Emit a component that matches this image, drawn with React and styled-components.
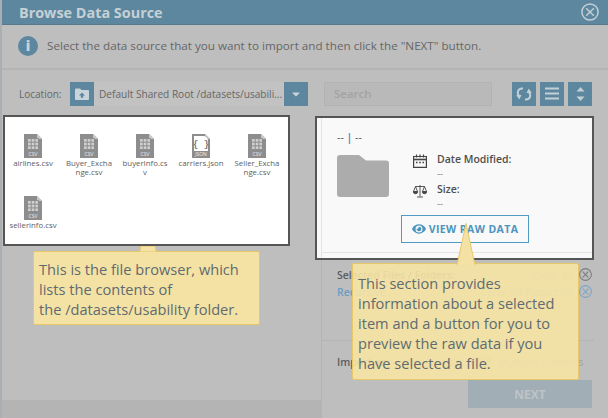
import React from 'react';
import styled, {createGlobalStyle} from 'styled-components';
import {FaEye, FaCaretDown} from 'react-icons/fa';

const files = [
  {name: 'airlines.csv', type: 'csv'},
  {name: 'Buyer_Exchange.csv', type: 'csv'},
  {name: 'buyerInfo.csv', type: 'csv'},
  {name: 'carriers.json', type: 'json'},
  {name: 'Seller_Exchange.csv', type: 'csv'},
  {name: 'sellerinfo.csv', type: 'csv'},
];

function FileGlyph({type}) {
  return (
    <svg width="18" height="24" viewBox="0 0 18 24">
      <path d="M0 0H13L18 5V24H0Z" fill="#8d8d8d" />
      <path d="M13 0L18 5H13Z" fill="#c9c9c9" />
      {type === 'csv' ? (
        <g fill="#cfcfcf" stroke="#8d8d8d" strokeWidth="1">
          <path d="M3.5 4.5H14.5V15.5H3.5Z" />
          <path d="M3.5 8.2H14.5M3.5 11.9H14.5M7.2 4.5V15.5M10.9 4.5V15.5" />
        </g>
      ) : (
        <g>
          <path d="M2 2H12.5L16 5.5V17H2Z" fill="#fff" />
          <text x="9" y="13" fontSize="9" fontFamily="Liberation Mono" fontWeight="700" textAnchor="middle" fill="#777">{'{ }'}</text>
        </g>
      )}
      <text x="9" y="22" fontSize="5" fontFamily="Open Sans" textAnchor="middle" fill="#eee">
        {type === 'csv' ? 'CSV' : 'JSON'}
      </text>
    </svg>
  );
}

function CloseCircle({size = 13, color = '#7d7d7d'}) {
  return (
    <svg width={size} height={size} viewBox="0 0 16 16" fill="none" stroke={color} strokeWidth="1.3">
      <circle cx="8" cy="8" r="7.2" />
      <path d="M4.6 4.6L11.4 11.4M11.4 4.6L4.6 11.4" />
    </svg>
  );
}

function App() {
  return (
    <Page>
      <GlobalStyle />
      <Header>
        <Title>Browse Data Source</Title>
        <CloseCircle size={18} color="#c4d0d6" />
      </Header>
      <InfoBar>
        <InfoDot>i</InfoDot>
        <span>Select the data source that you want to import and then click the "NEXT" button.</span>
      </InfoBar>
      <Toolbar>
        <FieldLabel>Location:</FieldLabel>
        <LocationField>
          <FilledButton>
            <svg width="14" height="12" viewBox="0 0 14 12">
              <path d="M0 1.5A1 1 0 0 1 1 .5H5L6.5 2H13A1 1 0 0 1 14 3V11A1 1 0 0 1 13 12H1A1 1 0 0 1 0 11Z" fill="#c8d4da" />
              <path d="M7 4.5L10 7.5H8.2V9.8H5.8V7.5H4Z" fill="#5c879f" />
            </svg>
          </FilledButton>
          <LocationText>Default Shared Root /datasets/usabili...</LocationText>
          <FilledButton><FaCaretDown size={12} color="#c8d4da" /></FilledButton>
        </LocationField>
        <SearchBox>Search</SearchBox>
        <ToolButtons>
          <FilledButton>
            <svg width="16" height="14" viewBox="0 0 16 14" fill="none" stroke="#c4d0d6" strokeWidth="2">
              <path d="M7 1.5C3.5 1.2 1.8 3.2 1.8 5.6C1.8 6.8 2.1 7.6 2.7 8.4" />
              <path d="M9 12.5C12.5 12.8 14.2 10.8 14.2 8.4C14.2 7.2 13.9 6.4 13.3 5.6" />
              <path d="M.3 8H5.5L3.2 12.6Z" fill="#c4d0d6" stroke="none" />
              <path d="M15.7 6H10.5L12.8 1.4Z" fill="#c4d0d6" stroke="none" />
            </svg>
          </FilledButton>
          <FilledButton>
            <svg width="14" height="13" viewBox="0 0 14 13" stroke="#c4d0d6" strokeWidth="2">
              <path d="M0 1.5H14M0 6.5H14M0 11.5H14" />
            </svg>
          </FilledButton>
          <FilledButton>
            <svg width="9" height="14" viewBox="0 0 9 14" fill="#c4d0d6">
              <path d="M4.5 0L8.5 4.5H.5Z" />
              <path d="M4.5 14L.5 9.5H8.5Z" />
            </svg>
          </FilledButton>
        </ToolButtons>
      </Toolbar>
      <Body>
        <LeftColumn>
          <Spotlight>
            <FileGrid>
              {files.map((file) => (
                <FileItem key={file.name}>
                  <FileGlyph type={file.type} />
                  <FileName>{file.name}</FileName>
                </FileItem>
              ))}
            </FileGrid>
          </Spotlight>
          <LeftFooter />
        </LeftColumn>
        <RightColumn>
          <DetailSpotlight>
            <DetailInner>
              <Crumb>-- <CrumbBar>|</CrumbBar> --</Crumb>
              <DetailRow>
                <svg width="52" height="42" viewBox="0 0 52 42">
                  <path d="M0 3A3 3 0 0 1 3 0H22L29 5.5H49A3 3 0 0 1 52 8.5V39A3 3 0 0 1 49 42H3A3 3 0 0 1 0 39Z" fill="#acacac" />
                </svg>
                <MetaList>
                  <MetaItem>
                    <svg width="14" height="14" viewBox="0 0 14 14" fill="none" stroke="#444" strokeWidth="1.2">
                      <path d="M.6 2.5H13.4V13.4H.6Z" />
                      <path d="M.6 5.5H13.4" strokeWidth="1.6" />
                      <path d="M3.5 .5V3.5M7 .5V3.5M10.5 .5V3.5" />
                      <path d="M3 8.5H4.5M6.2 8.5H7.8M9.5 8.5H11" strokeWidth="1.4" />
                    </svg>
                    <div>
                      <MetaLabel>Date Modified:</MetaLabel>
                      <MetaValue>--</MetaValue>
                    </div>
                  </MetaItem>
                  <MetaItem>
                    <svg width="14" height="14" viewBox="0 0 14 14" fill="#444" stroke="#444" strokeWidth=".9">
                      <path d="M7 1V12.5M4 13H10M2.5 2.5H11.5" fill="none" />
                      <path d="M2.5 2.5L.5 7.5M2.5 2.5L4.5 7.5M11.5 2.5L9.5 7.5M11.5 2.5L13.5 7.5" fill="none" />
                      <path d="M.3 7.5H4.7A2.2 2.2 0 0 1 .3 7.5ZM9.3 7.5H13.7A2.2 2.2 0 0 1 9.3 7.5Z" />
                    </svg>
                    <div>
                      <MetaLabel>Size:</MetaLabel>
                      <MetaValue>--</MetaValue>
                    </div>
                  </MetaItem>
                </MetaList>
              </DetailRow>
              <RawButton><FaEye size={14} />VIEW RAW DATA</RawButton>
              <InnerRule />
            </DetailInner>
          </DetailSpotlight>
          <LowerRight>
            <SelectedBlock>
              <SelectedRow>
                <SelectedTitle>Selected Files / Folders:</SelectedTitle>
                <ClearAction>Clear All <CloseCircle /></ClearAction>
              </SelectedRow>
              <SelectedRow>
                <RecursiveLink>Recursive</RecursiveLink>
                <ClearAction $blue>Clear All Recursive <CloseCircle color="#7fa6c4" /></ClearAction>
              </SelectedRow>
            </SelectedBlock>
            <ImportBlock>
              <ImportRow>
                <SelectedTitle>Import as:</SelectedTitle>
                <ImportOption>Single Dataset</ImportOption>
                <Toggle />
                <ImportOption>Multiple Datasets</ImportOption>
              </ImportRow>
              <NextButton>NEXT</NextButton>
            </ImportBlock>
          </LowerRight>
        </RightColumn>
      </Body>

      <BrowserTip>
        <TipStub width="18" height="6" viewBox="0 0 18 6">
          <path d="M2 0H16L17.5 6H.5Z" fill="#f4e2a5" stroke="#e8c766" />
        </TipStub>
        This is the file browser, which lists the contents of the&nbsp;/datasets/usability folder.
      </BrowserTip>
      <DetailTip>
        <TipPointer width="20" height="42" viewBox="0 0 20 42">
          <path d="M1 42L10 .5L19 42" fill="#f4e2a5" stroke="#e8c766" />
        </TipPointer>
        This section provides information about a selected item and a button for you to preview the raw data if you have selected a file.
      </DetailTip>
    </Page>
  );
}

const GlobalStyle = createGlobalStyle`
  html, body {
    margin:0;
    padding:0;
    background:#bebebe;
  }
  * {
    box-sizing:border-box;
  }
`

const Page = styled.div`
  position:relative;
  width:608px;
  height:418px;
  overflow:hidden;
  display:flex;
  flex-direction:column;
  background:#bebebe;
  border-left:2px solid #a9afb3;
  font-family:"Open Sans", sans-serif;
  color:#666;
`
const Header = styled.div`
  height:25px;
  flex:none;
  display:flex;
  align-items:center;
  justify-content:space-between;
  padding:0 9px 0 17px;
  background:#5c879f;
  border-bottom:1px solid #57798c;
`
const Title = styled.div`
  font-size:14.4px;
  font-weight:700;
  color:#c6d0d5;
`
const InfoBar = styled.div`
  height:45px;
  flex:none;
  display:flex;
  align-items:center;
  gap:9px;
  padding:0 0 2px 16px;
  font-size:11.66px;
  border-bottom:2px solid #b4b4b4;
`
const InfoDot = styled.div`
  width:20px;
  height:20px;
  border-radius:50%;
  background:#5c879f;
  color:#c8d4da;
  display:flex;
  align-items:center;
  justify-content:center;
  font-size:14px;
  font-weight:800;
`
const Toolbar = styled.div`
  height:45px;
  flex:none;
  display:flex;
  align-items:center;
  padding:2px 0 0 17px;
`
const FieldLabel = styled.div`
  width:51px;
  font-size:10px;
`
const LocationField = styled.div`
  width:238px;
  height:24px;
  display:flex;
  align-items:center;
  background:#c2c2c2;
`
const FilledButton = styled.div`
  width:24px;
  height:24px;
  flex:none;
  display:flex;
  align-items:center;
  justify-content:center;
  background:#5c879f;
`
const LocationText = styled.div`
  flex:1;
  min-width:0;
  padding-left:5px;
  font-size:10.1px;
  white-space:nowrap;
  overflow:hidden;
`
const SearchBox = styled.div`
  width:168px;
  height:24px;
  margin-left:16px;
  padding-left:9px;
  display:flex;
  align-items:center;
  font-size:11.5px;
  font-weight:600;
  color:#a3a3a3;
  background:#b9b9b9;
  border:1px solid #b3b3b3;
`
const ToolButtons = styled.div`
  display:flex;
  gap:4px;
  margin-left:20px;
`
const Body = styled.div`
  flex:1;
  min-height:0;
  display:flex;
`
const LeftColumn = styled.div`
  width:319px;
  flex:none;
  display:flex;
  flex-direction:column;
`
const Spotlight = styled.div`
  width:287px;
  height:131px;
  margin-left:1px;
  background:#fff;
  border:2px solid #555;
  position:relative;
  z-index:2;
`
const FileGrid = styled.div`
  display:grid;
  grid-template-columns:repeat(5, 56px);
  grid-auto-rows:62px;
  padding:17px 0 0 0;
`
const FileItem = styled.div`
  display:flex;
  flex-direction:column;
  align-items:center;
`
const FileName = styled.div`
  width:48px;
  margin-top:1px;
  font-size:7.8px;
  line-height:9px;
  color:#5e5e5e;
  text-align:center;
  word-break:break-all;
`
const LeftFooter = styled.div`
  margin-top:auto;
  height:18px;
  background:#b4b4b4;
`
const RightColumn = styled.div`
  flex:1;
  min-width:0;
  margin-left:-6px;
  display:flex;
  flex-direction:column;
  position:relative;
`
const DetailSpotlight = styled.div`
  width:279px;
  height:144px;
  margin-top:1px;
  flex:none;
  padding-left:4px;
  background:#f9f9f9;
  border:2px solid #555;
`
const DetailInner = styled.div`
  height:100%;
  border-left:1px solid #e4e4e4;
  padding:13px 0 0 15px;
  position:relative;
`
const Crumb = styled.div`
  font-size:10.5px;
  line-height:13px;
  color:#555;
`
const CrumbBar = styled.span`
  font-weight:700;
  color:#4a94bd;
`
const DetailRow = styled.div`
  display:flex;
  margin-top:11px;
`
const MetaList = styled.div`
  margin:-2px 0 0 24px;
  display:flex;
  flex-direction:column;
  gap:2px;
`
const MetaItem = styled.div`
  display:flex;
  gap:10px;
  svg { margin-top:1px; flex:none; }
`
const MetaLabel = styled.div`
  font-size:10.5px;
  line-height:13px;
  font-weight:600;
  color:#4e4e4e;
`
const MetaValue = styled.div`
  font-size:9.5px;
  line-height:15px;
  color:#777;
`
const RawButton = styled.div`
  position:absolute;
  left:79px;
  top:97px;
  width:128px;
  height:28px;
  display:flex;
  align-items:center;
  justify-content:center;
  gap:3px;
  font-size:10.5px;
  font-weight:700;
  letter-spacing:.4px;
  color:#4a94bd;
  background:#f9f9f9;
  border:1px solid #4f9cc2;
`
const InnerRule = styled.div`
  position:absolute;
  left:0;
  right:0;
  bottom:5px;
  border-top:1px solid #e4e4e4;
`
const LowerRight = styled.div`
  flex:1;
  margin-left:6px;
  width:273px;
  display:flex;
  flex-direction:column;
  border-left:1px solid #b4b4b4;
`
const SelectedBlock = styled.div`
  height:81px;
  padding:6px 2px 0 15px;
  border-bottom:1px solid #b4b4b4;
`
const SelectedRow = styled.div`
  height:17px;
  display:flex;
  align-items:center;
  justify-content:space-between;
`
const SelectedTitle = styled.div`
  font-size:10.5px;
  font-weight:600;
  color:#5c5c5c;
`
const ClearAction = styled.div`
  display:flex;
  align-items:center;
  gap:5px;
  font-size:10.5px;
  font-weight:600;
  color:${(p) => (p.$blue ? '#8fa8bb' : '#a8a8a8')};
`
const RecursiveLink = styled.div`
  font-size:10.5px;
  font-weight:600;
  color:#6a9cc2;
`
const ImportBlock = styled.div`
  padding:13px 0 0 15px;
`
const ImportRow = styled.div`
  height:15px;
  display:flex;
  align-items:center;
  gap:6px;
`
const ImportOption = styled.div`
  font-size:10.5px;
  color:#a3a3a3;
  white-space:nowrap;
`
const Toggle = styled.div`
  width:22px;
  height:11px;
  flex:none;
  border-radius:6px;
  background:#a8a8a8;
`
const NextButton = styled.div`
  width:124px;
  height:28px;
  margin:11px 0 0 131px;
  display:flex;
  align-items:center;
  justify-content:center;
  font-size:12px;
  font-weight:700;
  color:#bcc4c9;
  background:#a2aeb5;
`
const Tip = styled.div`
  position:absolute;
  width:227px;
  padding:7px 5px;
  font-size:14.6px;
  line-height:20px;
  color:#5f6b70;
  border:1px solid #e8c766;
  border-radius:2px;
`
const BrowserTip = styled(Tip)`
  left:31px;
  top:251px;
  height:74px;
  background:#f4e2a5;
  z-index:1;
`
const DetailTip = styled(Tip)`
  left:350px;
  top:263px;
  height:117px;
  padding:9px 5px;
  background:rgba(246,228,164,.9);
  z-index:3;
`
const TipStub = styled.svg`
  position:absolute;
  left:105px;
  top:-6px;
  display:block;
`
const TipPointer = styled.svg`
  position:absolute;
  left:103px;
  top:-41px;
  display:block;
`

export default App;
